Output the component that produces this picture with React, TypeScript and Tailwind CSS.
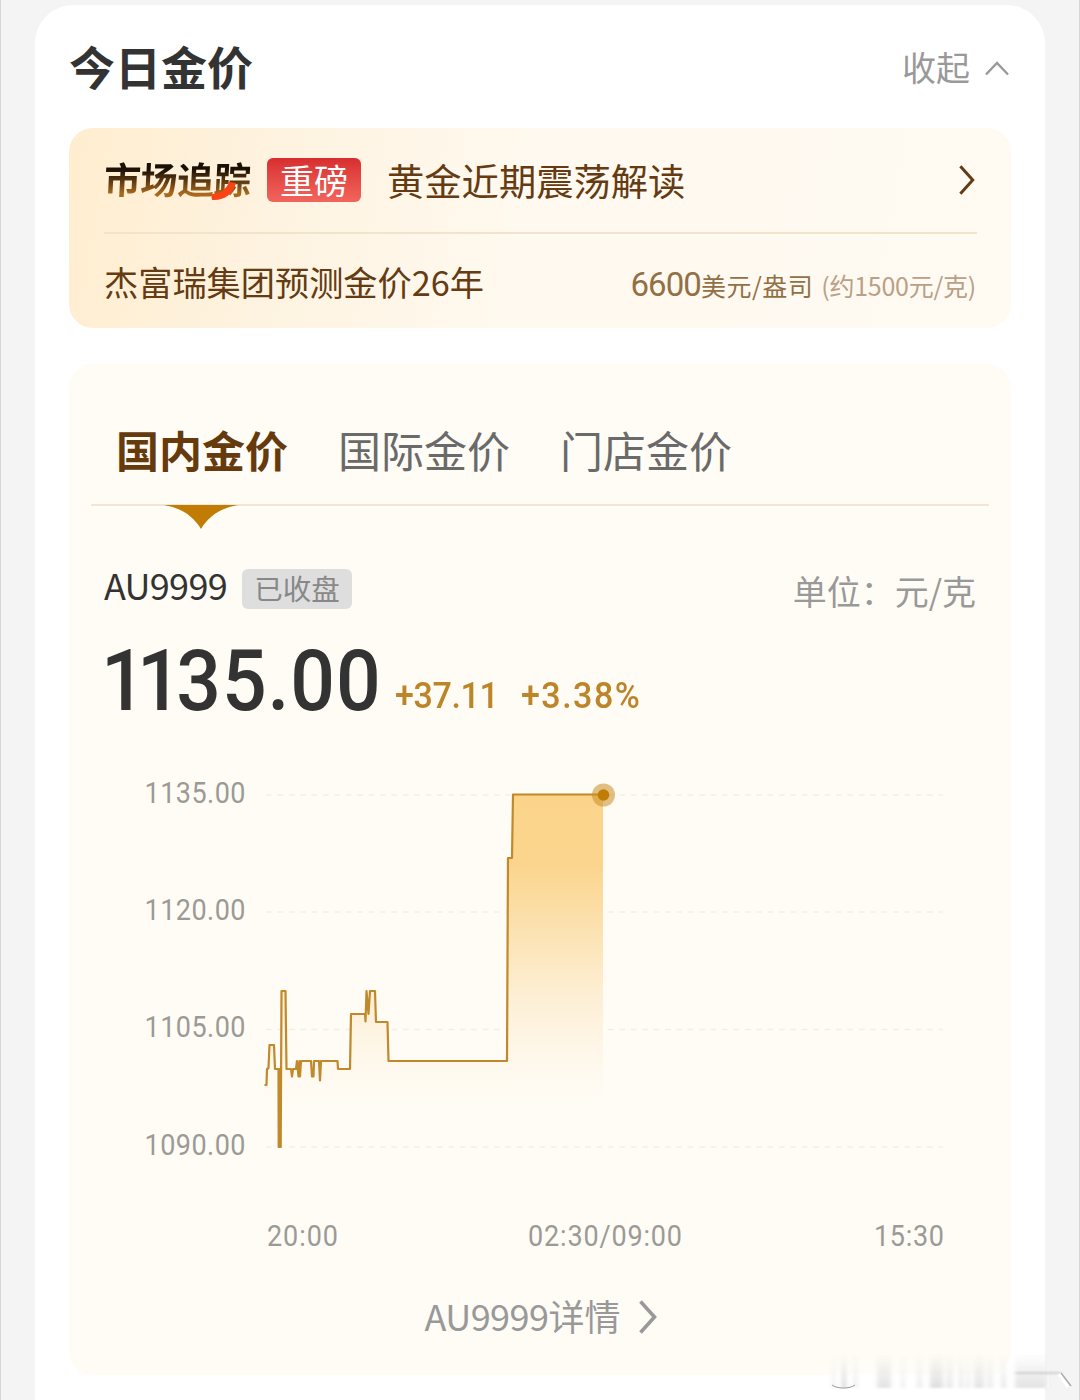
import type { ReactNode } from 'react';
import { clsx } from 'clsx';

const TABS = ['国内金价', '国际金价', '门店金价'];

const Y_TICKS = [
  { label: '1135.00', y: 0 },
  { label: '1120.00', y: 117 },
  { label: '1105.00', y: 234.5 },
  { label: '1090.00', y: 352 },
];

const X_TICKS = [
  { label: '20:00', x: 3, width: 71 },
  { label: '02:30/09:00', x: 264, width: 154 },
  { label: '15:30', x: 610, width: 70 },
];

// [x, y] relative to the top left corner of the plot
const POINTS: [number, number][] = [
  [0.5, 290], [2.5, 290], [3, 274], [4.5, 273], [5.5, 250], [10, 250], [11, 274],
  [14.5, 274], [14.7, 352], [15.7, 352], [15.7, 274], [16.7, 274], [16.7, 352],
  [17.5, 196], [21.5, 196], [22.5, 274],
  [27, 274], [28, 281.5], [29, 274], [32, 274], [33, 266], [34.5, 281.5], [35.5, 266],
  [36, 281.5], [37, 266], [47, 266], [48, 281.5], [49.5, 281.5], [50, 266],
  [55, 266], [56, 285.5], [57, 266], [73.5, 266], [74, 274], [86, 274], [87, 219],
  [101, 219], [101.5, 226.5], [102.5, 196], [104.5, 219], [106, 196], [111, 196],
  [112, 227], [123.5, 227], [124.5, 266], [243, 266], [244, 63], [248, 63],
  [249, -0.5], [339, -0.5],
];

const LINE = POINTS.map(([x, y], i) => `${i === 0 ? 'M' : 'L'}${x} ${y}`).join('');
const AREA = `${LINE}V352H0.5Z`;

// Labels are drawn slightly condensed
const LABEL_SCALE = 0.9;

function ChevronRight({ className, strokeWidth }: { className: string; strokeWidth: number }) {
  return (
    <svg viewBox="0 0 18 34" fill="none" stroke="currentColor" strokeWidth={strokeWidth} className={className}>
      <path d="M1.5 1.5L15.5 17L1.5 32.5" />
    </svg>
  );
}

function Tag({ className, children }: { className: string; children: ReactNode }) {
  return <span className={clsx('flex items-center justify-center rounded-md', className)}>{children}</span>;
}

function ChartLabel({ x, y, width, children }: { x: number; y: number; width: number; children: string }) {
  return (
    <text
      transform={`translate(${x} ${y}) scale(${LABEL_SCALE} 1)`}
      fontSize="30"
      fill="#9b9a97"
      textLength={width / LABEL_SCALE}
    >
      {children}
    </text>
  );
}

function MarketBanner() {
  return (
    <section className="mx-[34px] h-[200px] rounded-3xl bg-[linear-gradient(100deg,#ffedcf_0%,#fef3e0_22%,#fff9ef_48%,#fffaf2_100%)] pl-[35px] pr-[34px] text-[#643b12]">
      <div className="flex h-[106px] items-center border-b-2 border-[#f0e4ca]">
        <div className="relative w-[148px] pb-1">
          <span className="block -skew-x-3 bg-linear-to-b from-[#1b1005] from-30% to-[#a8691c] to-85% bg-clip-text text-[37px] font-bold leading-[44px] tracking-[-0.3px] text-transparent">
            市场追踪
          </span>
          <svg viewBox="0 0 26 20" className="absolute left-[107px] top-[25px] h-5 w-[26px]">
            <path d="M0 13C9 13 15 9 18 1L25 2C22 13 13 20 1 19Z" fill="#fb4415" />
          </svg>
        </div>
        <Tag className="ml-[15px] h-11 w-[94px] bg-linear-to-b from-[#d82c30] to-[#f2655c] pb-px text-[34px] text-white">
          重磅
        </Tag>
        <h2 className="ml-[26px] pt-px text-[37.3px]">黄金近期震荡解读</h2>
        <ChevronRight className="ml-auto mr-px h-[30px] w-[18px]" strokeWidth={3.4} />
      </div>
      <div className="flex h-[94px] items-baseline justify-between leading-[94px]">
        <span className="text-[34.2px]">杰富瑞集团预测金价26年</span>
        <span className="mr-px flex items-baseline text-[25px] text-[#927046]">
          <span className="font-['Roboto',sans-serif] text-[33px] tracking-[-0.9px]">6600</span>
          <span className="tracking-[0.5px]">美元/盎司</span>
          <span className="ml-2 tracking-[-0.25px] text-[#b9a086]">(约1500元/克)</span>
        </span>
      </div>
    </section>
  );
}

function PriceChart() {
  return (
    <svg viewBox="0 0 942 490" className="block h-[490px] w-[942px] font-['Roboto',sans-serif]">
      <defs>
        <linearGradient id="area" gradientUnits="userSpaceOnUse" x1="0" y1="0" x2="0" y2="352">
          <stop offset="0" stopColor="#fbd48a" />
          <stop offset="0.2" stopColor="#fbd58d" />
          <stop offset="0.34" stopColor="#fbdfa9" />
          <stop offset="0.56" stopColor="#fdeed3" />
          <stop offset="0.74" stopColor="#fef7ea" />
          <stop offset="0.92" stopColor="#fffcf5" stopOpacity="0" />
        </linearGradient>
      </defs>
      <g transform="translate(195 25)">
        {Y_TICKS.map((t) => (
          <g key={t.label}>
            <ChartLabel x={-119.5} y={t.y + 7.5} width={101}>
              {t.label}
            </ChartLabel>
            <path d={`M2 ${t.y}H679`} stroke="#f3efe5" strokeWidth="1.5" strokeDasharray="5.7 5.7" />
          </g>
        ))}
        <path d={AREA} fill="url(#area)" />
        <path d={LINE} fill="none" stroke="#c0892b" strokeWidth="2.2" strokeLinejoin="round" />
        <circle cx="339.5" cy="0" r="11.5" fill="#c98d22" fillOpacity="0.55" />
        <circle cx="339.5" cy="0" r="5.8" fill="#c17c05" />
        {X_TICKS.map((t) => (
          <ChartLabel key={t.label} x={t.x} y={451} width={t.width}>
            {t.label}
          </ChartLabel>
        ))}
      </g>
    </svg>
  );
}

function PricePanel() {
  return (
    <section className="mx-[34px] mt-9 h-[1011px] rounded-3xl bg-[#fffcf5]">
      <nav className="mx-[22px] flex h-[142px] items-center gap-[50px] border-b-2 border-[#f0e6d2] pl-[25px] pt-[30px] text-[43px]">
        {TABS.map((tab, i) => (
          <div key={tab} className={clsx('relative', i === 0 ? 'font-bold text-[#653a0d]' : 'text-[#6a6a6a]')}>
            {tab}
            {i === 0 && (
              <svg viewBox="0 0 74 24" className="absolute left-[48px] top-[77px] h-6 w-[74px]">
                <path d="M0 0H74C56 3 44 12 37 24C30 12 18 3 0 0Z" fill="#c17c05" />
              </svg>
            )}
          </div>
        ))}
      </nav>

      <div className="mx-[35px] mt-[61px] flex h-11 items-center text-[34px]">
        <span className="pb-[11px] text-[36px] tracking-[-0.7px] text-[#333]">AU9999</span>
        <Tag className="ml-[15px] h-10 w-[110px] bg-[#dedede] pb-px text-[28.5px] text-[#888]">已收盘</Tag>
        <span className="ml-auto pt-[3px] text-[#999]">单位：元/克</span>
      </div>

      <div className="mx-[35px] flex h-[153px] items-baseline font-['Roboto',sans-serif] font-medium leading-[140px]">
        <span className="-ml-[3px] w-[294px] origin-left scale-x-[0.915] text-[86px] tracking-[1px] text-[#333]">
          <span className="tracking-[-9.5px]">1</span>
          <span className="tracking-[-6px]">1</span>35.00
        </span>
        <span className="relative -top-0.5 flex text-[37px] text-[#bd852a]">
          <span className="w-[126px] origin-left scale-x-92 tracking-[-0.4px]">+37.11</span>
          <span className="origin-left scale-x-92 tracking-[1.6px]">+3.38%</span>
        </span>
      </div>

      <div className="mt-[6px]">
        <PriceChart />
      </div>

      <div className="mt-[25px] flex h-[60px] items-center justify-center pl-px text-[36px] text-[#999]">
        <span className="tracking-[-0.5px]">AU9999</span>详情
        <ChevronRight className="ml-[18px] mt-1 h-[34px] w-[18px]" strokeWidth={3.6} />
      </div>
    </section>
  );
}

// Smeared strip in the bottom right corner
const SMEARS = [
  [7, 3, 0.14], [17, 4, 0.3], [29, 3, 0.18], [52, 14, 0.2], [76, 4, 0.12], [92, 5, 0.14],
  [105, 13, 0.24], [121, 7, 0.16], [134, 4, 0.18], [141, 4, 0.14], [149, 10, 0.2],
  [162, 6, 0.14], [176, 5, 0.16], [190, 32, 0.2],
];

function CornerSmear() {
  return (
    <svg viewBox="0 0 250 50" className="absolute bottom-0 left-[824px] h-[50px] w-[250px]">
      <defs>
        <linearGradient id="smear" x1="0" y1="0" x2="0" y2="1">
          <stop offset="0" stopColor="#777" stopOpacity="0" />
          <stop offset="1" stopColor="#777" />
        </linearGradient>
        <linearGradient id="haze" x1="0" y1="0" x2="0" y2="1">
          <stop offset="0" stopColor="#fff" stopOpacity="0" />
          <stop offset="1" stopColor="#fff" stopOpacity="0.9" />
        </linearGradient>
        <filter id="soft">
          <feGaussianBlur stdDeviation="2 0.8" />
        </filter>
      </defs>
      <rect x="4" y="4" width="220" height="34" fill="url(#haze)" />
      <g filter="url(#soft)">
        {SMEARS.map(([x, width, opacity]) => (
          <rect key={x} x={x} y="4" width={width} height="34" fill="url(#smear)" opacity={opacity} />
        ))}
        <path d="M190 23H236" stroke="#aaa" strokeWidth="2" opacity="0.5" />
      </g>
      <path d="M7 35C12 39 25 39 30 35" fill="none" stroke="#999" strokeWidth="1" />
      <path d="M236 23L246 36" stroke="#aaa" strokeWidth="1.5" />
      <path d="M234 24L243 37" stroke="#fff" strokeWidth="3" />
    </svg>
  );
}

export default function App() {
  return (
    <main className="relative h-[1400px] w-[1080px] overflow-hidden border-x border-[#d6d6d6] bg-[#f4f4f4] px-[34px] pt-[5px] font-['Noto_Sans_CJK_SC',sans-serif] leading-none">
      <div className="h-[1440px] w-[1010px] rounded-[38px] bg-white">
        <header className="flex h-[123px] items-center justify-between pl-[34px] pr-[36px]">
          <h1 className="pb-[3px] text-[46px] font-bold text-[#333]">今日金价</h1>
          <button type="button" className="flex items-center gap-[15px] text-[34px] text-[#999]">
            收起
            <svg viewBox="0 0 24 15" fill="none" stroke="currentColor" strokeWidth="2.4" className="mt-[3px] h-[15px] w-6">
              <path d="M1 13.5L12 2L23 13.5" />
            </svg>
          </button>
        </header>
        <MarketBanner />
        <PricePanel />
      </div>
      <CornerSmear />
    </main>
  );
}
